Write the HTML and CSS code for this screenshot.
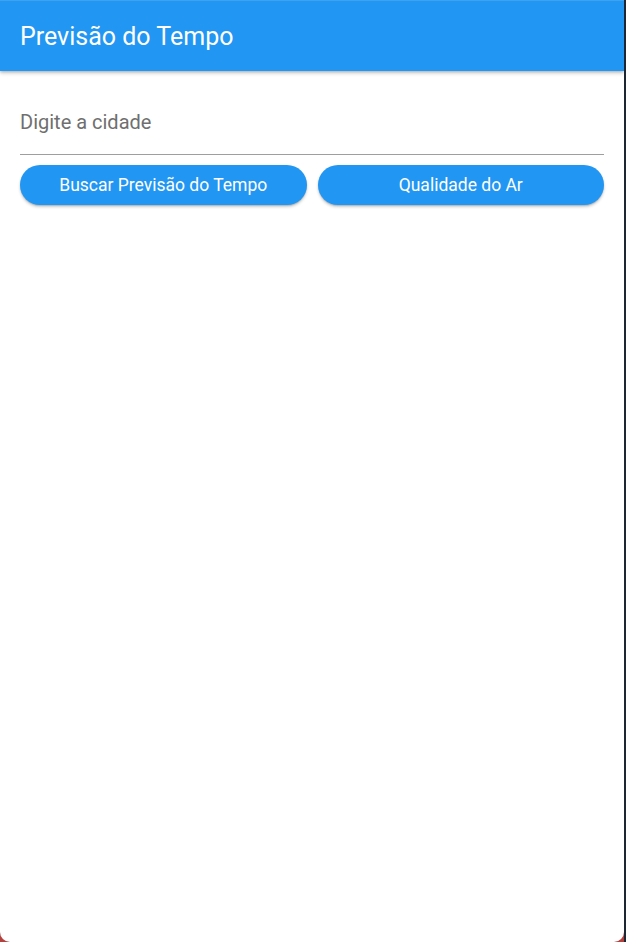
FILE: index.html
```html
<!DOCTYPE html>
<html lang="pt">
<head>
<meta charset="utf-8">
<title>Previsão do Tempo</title>
<link rel="stylesheet" href="styles.css">
</head>
<body>
<div class="device">
  <div class="screen">
    <header class="appbar">
      <h1 class="title">Previsão do Tempo</h1>
    </header>
    <main class="content">
      <div class="field">
        <input class="field-input" type="text" placeholder="Digite a cidade">
      </div>
      <div class="actions">
        <button class="btn">Buscar Previsão do Tempo</button>
        <button class="btn">Qualidade do Ar</button>
      </div>
    </main>
  </div>
  <div class="edge"></div>
</div>
</body>
</html>
```
FILE: styles.css
```css
* { box-sizing: border-box; }
html, body {
  margin: 0;
  padding: 0;
  width: 626px;
  height: 942px;
  overflow: hidden;
  background: #b3423e;
  font-family: Roboto, "Noto Sans", sans-serif;
}
.device {
  display: flex;
  width: 626px;
  height: 942px;
}
.screen {
  flex: 1;
  height: 942px;
  background: #ffffff;
  border-radius: 0 0 10px 10px;
  overflow: hidden;
  display: flex;
  flex-direction: column;
}
.edge {
  width: 2px;
  height: 942px;
  background: #1f2633;
}
.appbar {
  height: 71px;
  background: #2196f3;
  display: flex;
  align-items: center;
  padding: 0 20px;
  box-shadow: 0 2px 4px rgba(0,0,0,0.22), 0 1px 2px rgba(0,0,0,0.12);
  position: relative;
  z-index: 1;
  border-top: 1px solid #3ea2f0;
}
.title {
  margin: 0;
  color: #ffffff;
  font-weight: 400;
  font-size: 25px;
  letter-spacing: 0;
}
.content {
  padding: 20px 20px 0 20px;
}
.field {
  border-bottom: 1px solid #9e9e9e;
  height: 64px;
  display: flex;
  align-items: center;
}
.field-input {
  border: none;
  outline: none;
  width: 100%;
  font-family: Roboto, "Noto Sans", sans-serif;
  font-size: 20px;
  color: #333;
  background: transparent;
  padding: 0;
  margin-top: -2px;
}
.field-input::placeholder { color: #6f6f6f; }
.actions {
  display: flex;
  gap: 11px;
  margin-top: 10px;
}
.btn {
  flex: 1;
  height: 40px;
  border: none;
  border-radius: 20px;
  background: #2196f3;
  color: #ffffff;
  font-family: Roboto, "Noto Sans", sans-serif;
  font-size: 17.5px;
  font-weight: 400;
  box-shadow: 0 2px 3px rgba(0,0,0,0.2), 0 1px 1px rgba(0,0,0,0.12);
  padding: 0 8px;
}
```
